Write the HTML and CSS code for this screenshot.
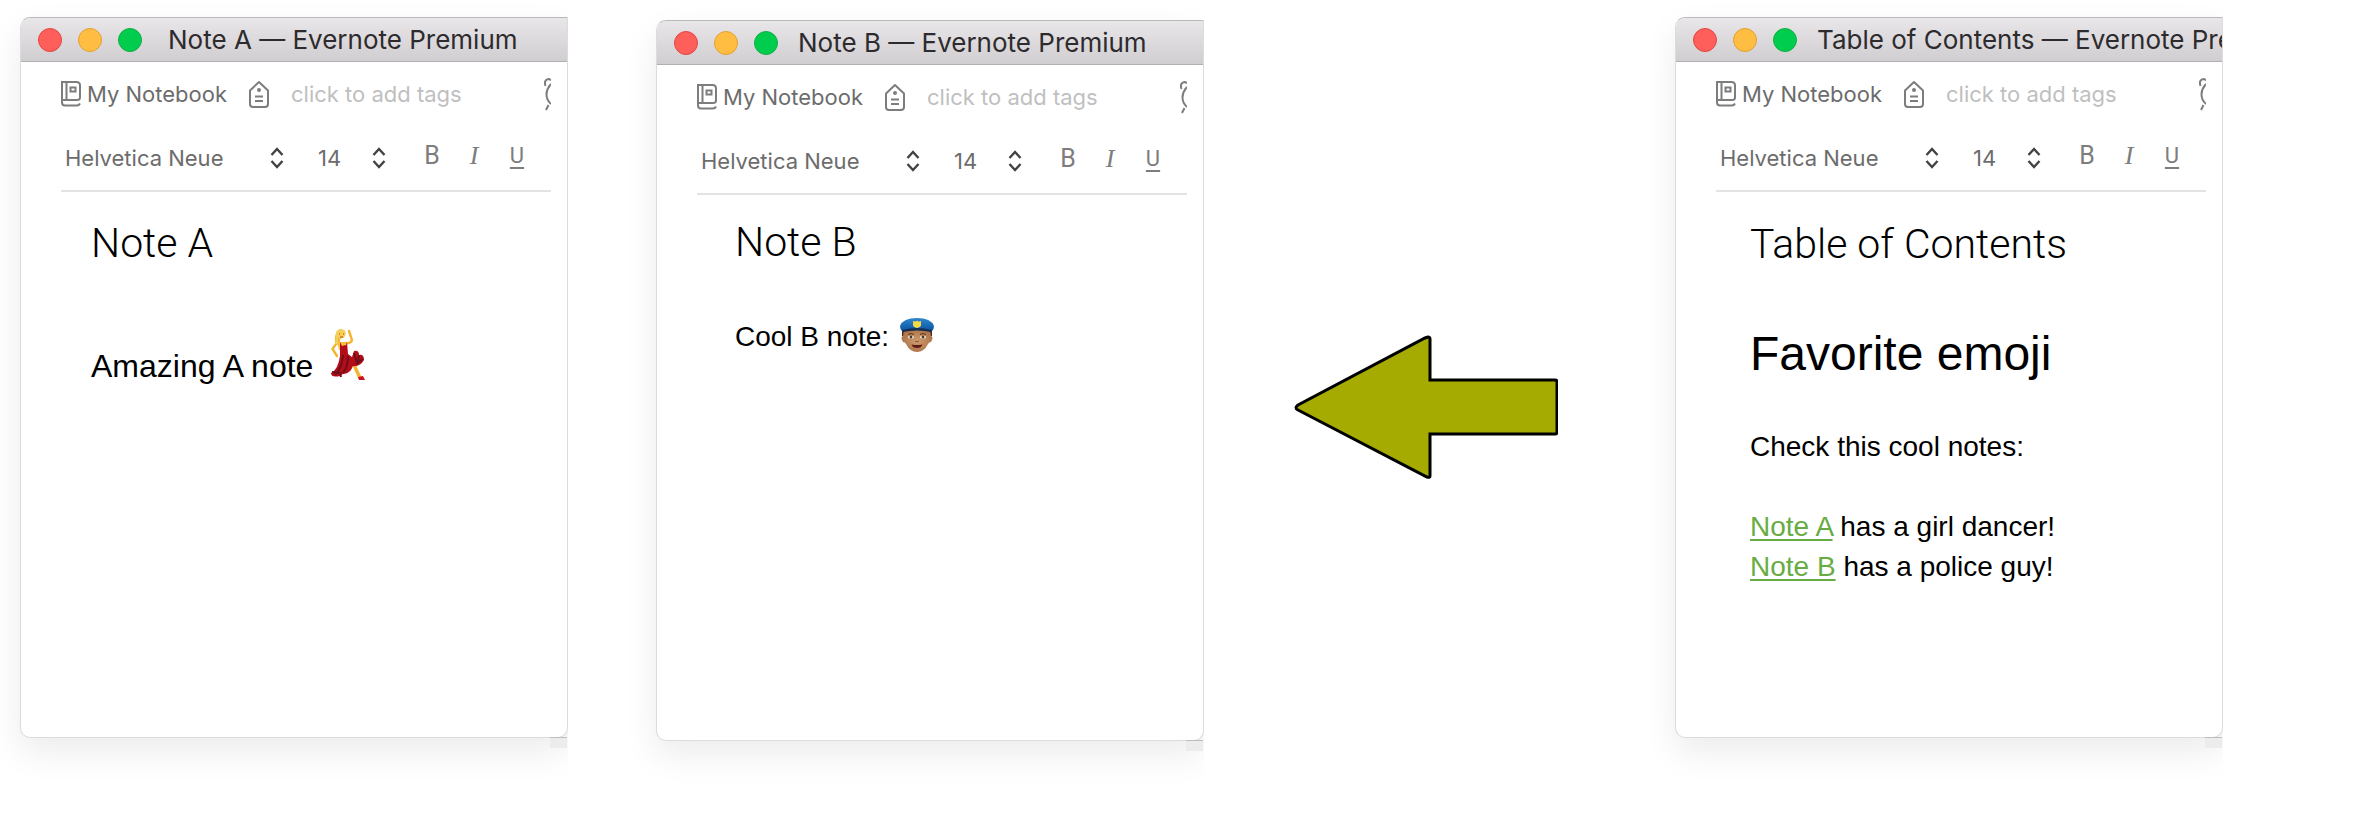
FILE: index.html
```html
<!DOCTYPE html>
<html lang="en">
<head>
<meta charset="utf-8">
<title>Evernote notes</title>
<link rel="stylesheet" href="styles.css">
</head>
<body>
<svg class="sprite" aria-hidden="true">
  <symbol id="book" viewBox="0 0 20 26">
    <g fill="none" stroke="#7d7d7d" stroke-width="2">
      <path d="M1 1h14.500q3.500 0 3.500 3.500v12q0 2.500-3 2.500H1zM5.500 1v18M1 18v3.500q0 3 3 3h12q2 0 3-2"/>
      <path d="M9.500 6.500h5v4h-5z"/>
    </g>
  </symbol>
  <symbol id="tag" viewBox="0 0 20 28">
    <g fill="none" stroke="#7d7d7d" stroke-width="2" stroke-linejoin="round">
      <path d="M1 10.500 10 2l9 8.500V24q0 3-3 3H4q-3 0-3-3zM6 16.500h8M6 21h8"/>
    </g>
    <circle cx="10" cy="10" r="2" fill="#7d7d7d"/>
  </symbol>
  <symbol id="clock" viewBox="0 0 7 34">
    <path d="M1.500 9Q-.5 3 4.500 2q1.500 0 2.500 1.500M7 7Q2.500 12 2.500 17.500T7 27M4.500 28 2 33" fill="none" stroke="#7d7d7d" stroke-width="2"/>
  </symbol>
  <symbol id="updown" viewBox="0 0 14 22">
    <path d="M1.500 8 7 2l5.500 6M1.500 14 7 20l5.500-6" fill="none" stroke="#424242" stroke-width="2.400"/>
  </symbol>
</svg>
<main class="desk">
  <section class="window note-a" aria-label="Note A">
    <header class="titlebar">
      <div class="lights"><button class="light red" aria-label="Close"></button><button class="light amber" aria-label="Minimize"></button><button class="light green" aria-label="Zoom"></button></div>
      <h2 class="caption">Note A — Evernote Premium</h2>
    </header>
    <div class="tools">
      <div class="row">
        <button class="notebook"><svg class="book"><use href="#book"/></svg>My Notebook</button>
        <label class="tags"><svg class="tag"><use href="#tag"/></svg><input class="tag-input" type="text" placeholder="click to add tags" aria-label="Tags"></label>
        <svg class="clock"><use href="#clock"/></svg>
      </div>
      <div class="row format">
        <label class="pick family"><select aria-label="Font"><option>Helvetica Neue</option></select><svg class="updown"><use href="#updown"/></svg></label>
        <label class="pick size"><select aria-label="Font size"><option>14</option></select><svg class="updown"><use href="#updown"/></svg></label>
        <div class="styles"><button class="bold" aria-label="Bold">B</button><button class="italic" aria-label="Italic">I</button><button class="under" aria-label="Underline">U</button></div>
      </div>
    </div>
    <article class="page">
      <h1 class="title">Note A</h1>
      <p class="text large">Amazing A note
        <svg class="dancer" viewBox="0 0 34 52" role="img" aria-label="Dancer">
          <path d="M7 3Q3 5 4 16l4 1 3-13z" fill="#efb936"/>
          <path d="M5 16 1.500 21 6 28M14 15q6 1 7-3L18 3" fill="none" stroke="#f3b52f" stroke-width="2.400" stroke-linecap="round"/>
          <path d="M23 37l6 13" stroke="#f3b52f" stroke-width="3.400"/>
          <path d="M6 14h8l1 5-7 3z" fill="#f5bf42"/>
          <circle cx="10" cy="6" r="4.500" fill="#f9cb55"/>
          <path d="M5 8Q4 1 10 1q5 0 5 6-2-4-6-3-3 2-2 12H4z" fill="#f4cf5d"/>
          <path d="M8 6h1M12 6h1M9 9h3" stroke="#9a5b19" stroke-width="1"/>
          <path d="M9 14l2 4 4-1 1-3 1 12 4 3 2-6q5-1 5 4 5-1 5 5-4 7-11 6-3 8-10 8l-3 2Q0 50 0 45q7-3 9-17z" fill="#b30d19"/>
          <path d="M12 27Q11 40 4 47M17 28q0 11-5 17M23 25l3 10M28 27l-1 9M32 31l-7 5M1 44l8 1 1 4" fill="none" stroke="#6f0d1b" stroke-width="2"/>
          <path d="M27 49l5-1 2 4h-6z" fill="#c9141e"/>
        </svg></p>
    </article>
  </section>

  <section class="window note-b" aria-label="Note B">
    <header class="titlebar">
      <div class="lights"><button class="light red" aria-label="Close"></button><button class="light amber" aria-label="Minimize"></button><button class="light green" aria-label="Zoom"></button></div>
      <h2 class="caption">Note B — Evernote Premium</h2>
    </header>
    <div class="tools">
      <div class="row">
        <button class="notebook"><svg class="book"><use href="#book"/></svg>My Notebook</button>
        <label class="tags"><svg class="tag"><use href="#tag"/></svg><input class="tag-input" type="text" placeholder="click to add tags" aria-label="Tags"></label>
        <svg class="clock"><use href="#clock"/></svg>
      </div>
      <div class="row format">
        <label class="pick family"><select aria-label="Font"><option>Helvetica Neue</option></select><svg class="updown"><use href="#updown"/></svg></label>
        <label class="pick size"><select aria-label="Font size"><option>14</option></select><svg class="updown"><use href="#updown"/></svg></label>
        <div class="styles"><button class="bold" aria-label="Bold">B</button><button class="italic" aria-label="Italic">I</button><button class="under" aria-label="Underline">U</button></div>
      </div>
    </div>
    <article class="page">
      <h1 class="title">Note B</h1>
      <p class="text">Cool B note:
        <svg class="officer" viewBox="0 0 34 34" role="img" aria-label="Police officer">
          <defs>
            <linearGradient id="cap" x2="0" y2="1"><stop stop-color="#3186cd"/><stop offset="1" stop-color="#0754a3"/></linearGradient>
            <radialGradient id="skin"><stop stop-color="#cf9b70"/><stop offset="1" stop-color="#b0764b"/></radialGradient>
          </defs>
          <path d="M2 12h30l-1 6q3 1 0 6-2 0-3 2-4 8-11 8T6 26q-1-2-3-2-3-5 0-6z" fill="url(#skin)"/>
          <path d="M2 12h2l-1 6H2zM32 12h-2l1 6h1z" fill="#4a2c1c"/>
          <path d="M0 8Q3 0 17 0t17 8q0 3-2 5-15-3-30 0-2-2-2-5z" fill="url(#cap)"/>
          <path d="M2 12q15-4 30 0l-1 2q-14-3-28 0z" fill="#142f50"/>
          <path d="M13 3q3 1 4-.5Q18 4 21 3v4q0 2-4 3-4-1-4-3z" fill="#f3da45"/>
          <path d="M8 16.500q3-2 6 0M20 16.500q3-2 6 0" fill="none" stroke="#59351f" stroke-width="1"/>
          <ellipse cx="11" cy="19" rx="3" ry="1.600" fill="#eee6d6"/><ellipse cx="23" cy="19" rx="3" ry="1.600" fill="#eee6d6"/>
          <circle cx="11" cy="19" r="1.400" fill="#4b3928"/><circle cx="23" cy="19" r="1.400" fill="#4b3928"/>
          <path d="M15 23q2 1.500 4 0" fill="none" stroke="#865334"/>
          <path d="M11.500 26.500q5.500 1 11 0-1 3.500-5.500 3.500t-5.500-3.500z" fill="#601d18"/>
        </svg></p>
    </article>
  </section>

  <div class="pointer">
    <svg class="arrow" viewBox="0 0 264 146" role="img" aria-label="Arrow to the left">
      <path d="M134 2q2 0 2 2v41h125q2 0 2 2v50q0 2-2 2H136v42q0 2-3 1L4 75q-4-2 0-5L131 3z" fill="#a5ab00" stroke="#000" stroke-width="3"/>
    </svg>
  </div>

  <section class="window contents" aria-label="Table of Contents">
    <header class="titlebar">
      <div class="lights"><button class="light red" aria-label="Close"></button><button class="light amber" aria-label="Minimize"></button><button class="light green" aria-label="Zoom"></button></div>
      <h2 class="caption">Table of Contents — Evernote Premium</h2>
    </header>
    <div class="tools">
      <div class="row">
        <button class="notebook"><svg class="book"><use href="#book"/></svg>My Notebook</button>
        <label class="tags"><svg class="tag"><use href="#tag"/></svg><input class="tag-input" type="text" placeholder="click to add tags" aria-label="Tags"></label>
        <svg class="clock"><use href="#clock"/></svg>
      </div>
      <div class="row format">
        <label class="pick family"><select aria-label="Font"><option>Helvetica Neue</option></select><svg class="updown"><use href="#updown"/></svg></label>
        <label class="pick size"><select aria-label="Font size"><option>14</option></select><svg class="updown"><use href="#updown"/></svg></label>
        <div class="styles"><button class="bold" aria-label="Bold">B</button><button class="italic" aria-label="Italic">I</button><button class="under" aria-label="Underline">U</button></div>
      </div>
    </div>
    <article class="page">
      <h1 class="title">Table of Contents</h1>
      <h2 class="heading">Favorite emoji</h2>
      <p class="text">Check this cool notes:</p>
      <p class="text links"><a href="#">Note A</a> has a girl dancer!<br><a href="#">Note B</a> has a police guy!</p>
    </article>
  </section>
</main>
</body>
</html>
```

FILE: styles.css
```css
* { box-sizing: border-box; }

body {
  margin: 0;
  background: #fff;
  color: #000;
  font-family: "Liberation Sans", Arial, sans-serif;
}

h1, h2, p { margin: 0; font-weight: 400; }

button, input, select {
  margin: 0;
  padding: 0;
  border: 0;
  background: none;
  color: inherit;
  font: inherit;
}

.sprite { display: none; }

.desk {
  display: grid;
  grid-template-columns: 548fr 548fr 295fr 548fr;
  column-gap: 88px;
  min-height: 100vh;
  padding: 17px 139px 76px 20px;
}

.window {
  position: relative;
  min-width: 0;
  border: 1px solid #dcdcdc;
  border-top-color: #b9b9b9;
  border-radius: 10px 0 10px 10px;
  background: #fff;
  box-shadow: 0 14px 34px rgba(0, 0, 0, 0.08);
  clip-path: inset(-20px 0 -76px -40px);
}

.window::after {
  content: "";
  position: absolute;
  top: 100%;
  right: 0;
  width: 17px;
  height: 10px;
  border-top: 1px solid #bdbdbd;
  background: #ececec;
}

.note-b { margin: 3px 0 -3px; }

.titlebar {
  display: flex;
  align-items: center;
  height: 44px;
  padding-left: 17px;
  overflow: hidden;
  border-bottom: 1px solid #b1afb1;
  border-radius: 9px 0 0 0;
  background: linear-gradient(#e9e6e9, #d1ced1);
}

.lights { display: flex; flex: none; gap: 16px; }

.light { width: 24px; height: 24px; border: 1px solid; border-radius: 50%; }
.red { background: #ff5f5a; border-color: #e2463f; }
.amber { background: #ffbe41; border-color: #e0a032; }
.green { background: #00cd4e; border-color: #13ae42; }

.caption {
  margin-left: 26px;
  color: #2d2b2d;
  font: 400 26px/32px Inter, sans-serif;
  white-space: nowrap;
}

.note-b .caption, .contents .caption { margin-left: 20px; }

.tools {
  margin: 0 16px 0 40px;
  border-bottom: 2px solid #e3e3e3;
  color: #6c6c6c;
  font: 400 22px/28px Inter, sans-serif;
}

.row { display: flex; align-items: center; height: 64px; }

.notebook { display: flex; align-items: center; gap: 6px; white-space: nowrap; }
.book { width: 20px; height: 26px; }
.tags { display: flex; flex: 1; align-items: center; gap: 22px; min-width: 0; margin-left: 22px; }
.tag { flex: none; width: 20px; height: 28px; }
.tag-input { flex: 1; min-width: 0; }
.tag-input::placeholder { color: #bfbfbf; opacity: 1; }
.clock { flex: none; width: 7px; height: 34px; }

.format { padding-left: 4px; }
.pick { display: flex; flex: none; align-items: center; justify-content: space-between; }
.pick select { appearance: none; }
.family { width: 219px; }
.size { width: 68px; margin-left: 34px; }
.updown { width: 14px; height: 22px; }

.styles { display: flex; align-items: center; margin: 0 0 4px 30px; color: #7d7d7d; }
.styles button { text-align: center; line-height: 28px; }
.styles .bold { width: 32px; font-family: Roboto, sans-serif; font-size: 25px; }
.styles .italic { width: 52px; font: italic 400 26px/28px "Liberation Serif", serif; }
.styles .under { width: 34px; font-family: Roboto, sans-serif; text-decoration: underline; text-underline-offset: 4px; }

.page { padding: 28px 16px 32px 74px; }
.note-a .page { padding: 27px 16px 32px 70px; }
.note-b .page { padding: 23px 16px 32px 78px; }

.title { font: 300 41px/48px Roboto, sans-serif; }
.text { margin-top: 51px; font-size: 28px; line-height: 40px; }
.large { margin-top: 79px; font-size: 32px; }
.heading { margin-top: 58px; font-size: 48px; line-height: 56px; }
.heading + .text { margin-top: 45px; }
.links { margin-top: 40px; }
.links a { color: #67ac43; text-decoration-thickness: 2px; text-underline-offset: 3px; }

.dancer { width: 34px; height: 52px; margin: -30px 0 0 9px; vertical-align: -3px; }
.officer { width: 34px; height: 34px; margin-left: 3px; vertical-align: -6px; }

.pointer { display: flex; align-items: center; justify-content: center; padding: 60px 28px 0 0; }
.arrow { width: 264px; height: 146px; }
```
